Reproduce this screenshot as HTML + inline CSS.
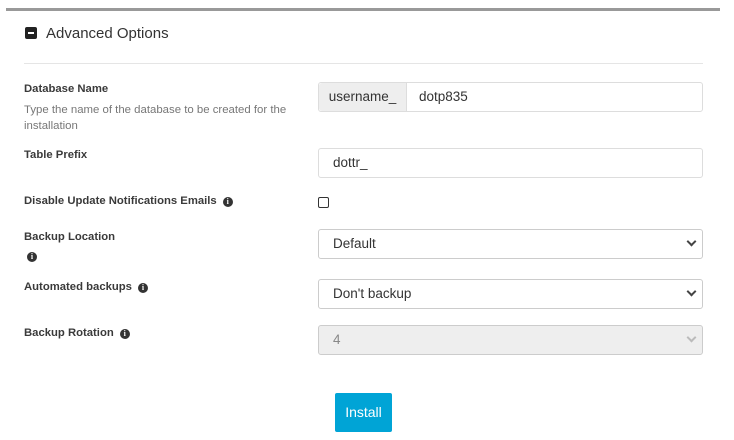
<!DOCTYPE html>
<html><head><meta charset="utf-8"><style>
*{box-sizing:border-box}
body{margin:0;width:734px;height:440px;background:#fff;font-family:"Liberation Sans",sans-serif;color:#333;position:relative;overflow:hidden}
.abs{position:absolute}
.bar{left:6px;top:8px;width:714px;height:3px;background:#999}
.title{left:46px;top:25px;font-size:15px;color:#333}
.ico{left:25px;top:27px;width:12px;height:12px;background:#222;border-radius:2px}
.ico:after{content:"";position:absolute;left:3px;top:5px;width:6px;height:2px;background:#fff}
.sep{left:24px;top:63px;width:679px;height:1px;background:#e5e5e5}
.lbl{left:24px;font-size:11.3px;font-weight:bold;color:#3a3a3a}
.desc{left:24px;font-size:11.4px;color:#777;line-height:16px;width:280px}
.box{left:318px;width:385px;height:30px;border:1px solid #ddd;border-radius:3px;font-size:13.5px;color:#333;padding-left:14px;line-height:28px;background:#fff}
.sel{border-color:#ccc}
.chev{position:absolute;right:7px;width:7px;height:7px;border-right:2px solid #444;border-bottom:2px solid #444;transform:rotate(45deg);top:8px}
.info{display:inline-block;width:10px;height:10px;border-radius:50%;background:#333;color:#fff;font-size:8px;line-height:10px;text-align:center;font-weight:bold;vertical-align:0px;margin-left:6px;font-family:"Liberation Serif",serif}
.btn{left:335px;top:393px;width:57px;height:39px;background:#00a4d6;border-radius:2px;color:#fff;font-size:14px;text-align:center;line-height:39px}
</style></head><body>
<div class="abs bar"></div>
<div class="abs ico"></div>
<div class="abs title">Advanced Options</div>
<div class="abs sep"></div>

<div class="abs lbl" style="top:83px">Database Name</div>
<div class="abs desc" style="top:102px">Type the name of the database to be created for the installation</div>
<div class="abs box" style="top:82px;padding-left:0">
 <span style="display:inline-block;width:88px;height:28px;background:#eee;border-right:1px solid #ddd;text-align:center;border-radius:3px 0 0 3px">username_</span><span style="padding-left:12px">dotp835</span>
</div>

<div class="abs lbl" style="top:149px">Table Prefix</div>
<div class="abs box" style="top:148px">dottr_</div>

<div class="abs lbl" style="top:195px">Disable Update Notifications Emails<span class="info">i</span></div>
<div class="abs" style="left:318px;top:197px;width:11px;height:11px;border:1px solid #333;border-radius:2px"></div>

<div class="abs lbl" style="top:231px">Backup Location</div>
<div class="abs lbl" style="top:250px"><span class="info" style="margin-left:3px">i</span></div>
<div class="abs box sel" style="top:229px">Default<span class="chev"></span></div>

<div class="abs lbl" style="top:281px">Automated backups<span class="info">i</span></div>
<div class="abs box sel" style="top:279px">Don't backup<span class="chev"></span></div>

<div class="abs lbl" style="top:327px">Backup Rotation<span class="info">i</span></div>
<div class="abs box sel" style="top:325px;background:#eee;color:#888">4<span class="chev" style="border-color:#bbb"></span></div>

<div class="abs btn">Install</div>
</body></html>
